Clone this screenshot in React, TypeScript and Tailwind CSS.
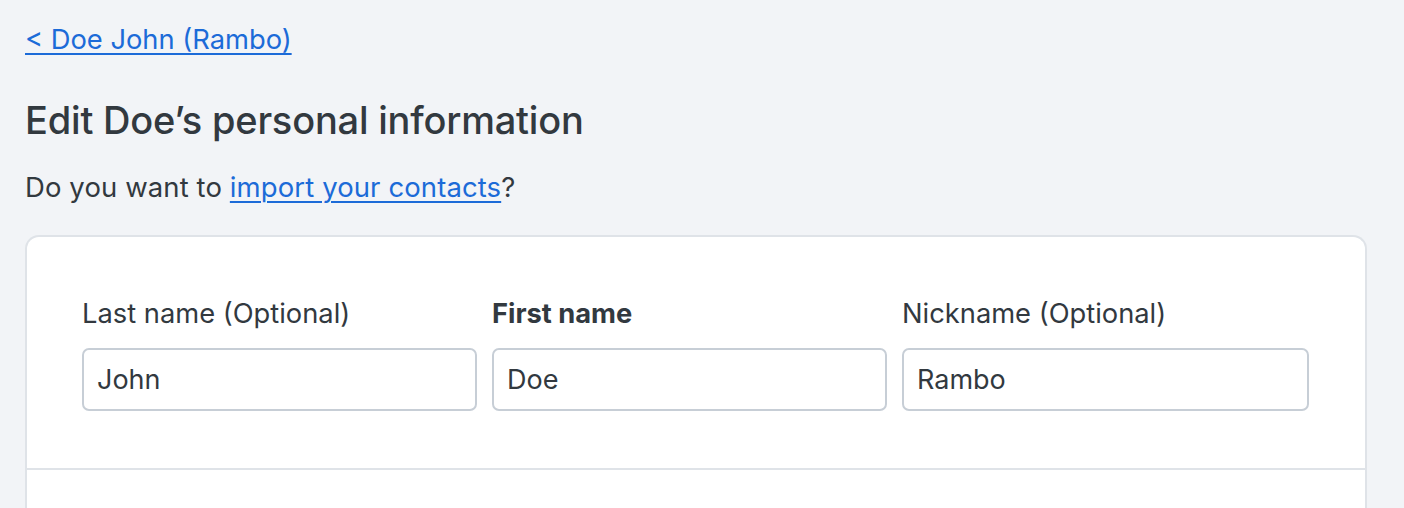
export default function App() {
  return (
    <div className="min-h-screen bg-[#f2f4f7] px-[25px] pt-[22px] text-[#32393f]" style={{ fontFamily: "Inter, 'Noto Sans', sans-serif" }}>
      <a href="#" className="text-[27.3px] leading-[36px] text-[#1c6bd8] underline underline-offset-[4px] decoration-[2px]">
        &lt; Doe John (Rambo)
      </a>
      <h1 className="mt-[38px] text-[38px] font-medium leading-[48px] tracking-[-0.2px]">Edit Doe’s personal information</h1>
      <p className="mt-[25px] text-[27.5px] leading-[36px] tracking-[0.1px]">
        Do you want to{" "}
        <a href="#" className="text-[#1c6bd8] underline underline-offset-[4px] decoration-[2px]">
          import your contacts
        </a>
        ?
      </p>
      <div className="mt-[30px] w-[1342px] rounded-t-[14px] border-2 border-b-0 border-[#dfe3e8] bg-white">
        <div className="flex gap-[15px] border-b-2 border-[#dfe3e8] px-[55px] pb-[57px] pt-[59px]">
          <Field label="Last name (Optional)" value="John" width="w-[395px]" />
          <Field label="First name" value="Doe" width="w-[395px]" bold />
          <Field label="Nickname (Optional)" value="Rambo" width="w-[407px]" />
        </div>
        <div className="h-[60px]" />
      </div>
    </div>
  );
}

function Field({ label, value, width, bold }: { label: string; value: string; width: string; bold?: boolean }) {
  return (
    <label className={`flex flex-col ${width}`}>
      <span className={`text-[27.3px] leading-[36px] ${bold ? "font-bold" : ""}`}>{label}</span>
      <input
        className="mt-[16px] h-[63px] rounded-[7px] border-2 border-[#c7ced6] bg-white px-[13px] text-[27px] text-[#32393f] outline-none"
        defaultValue={value}
        style={{ fontFamily: "Inter, 'Noto Sans', sans-serif" }}
      />
    </label>
  );
}
